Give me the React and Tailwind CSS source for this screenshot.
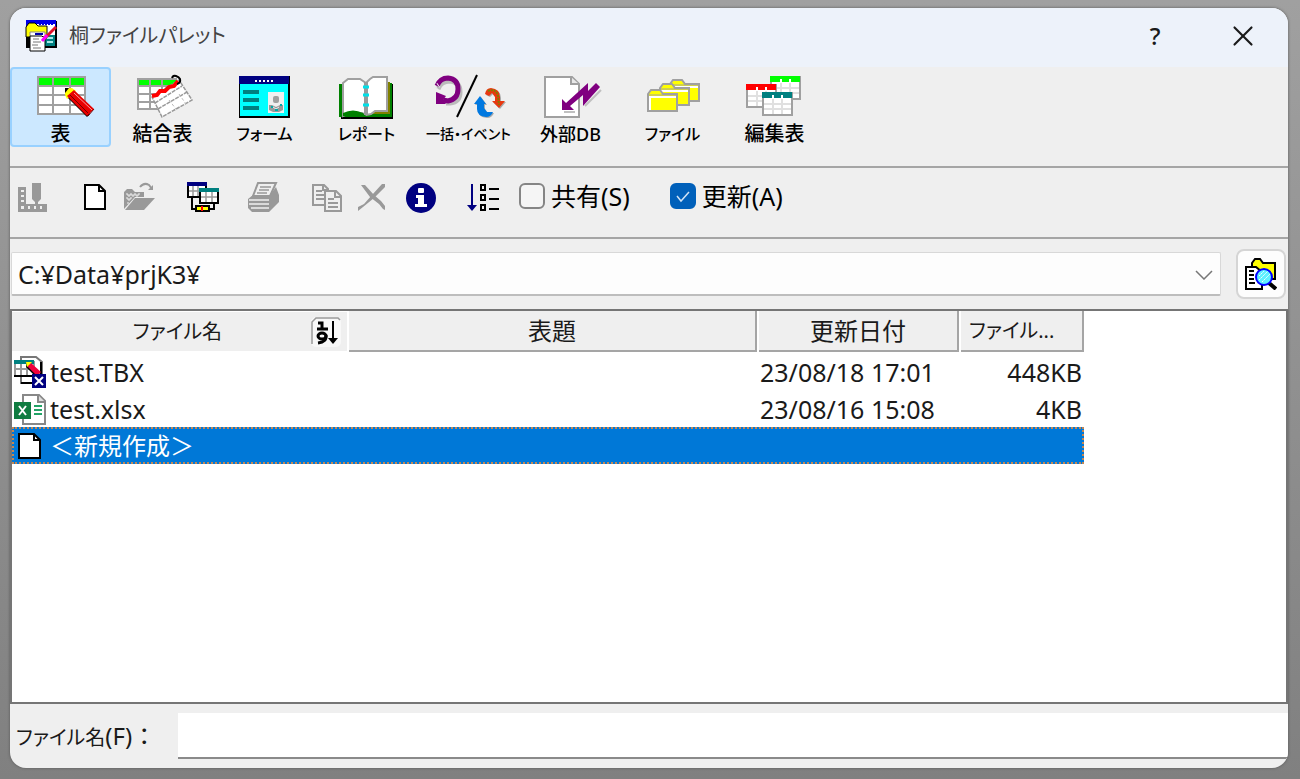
import { useState } from 'react';
import { X } from 'lucide-react';

const AppIcon = () => (
    <svg viewBox="0 0 32 32" className="size-8" aria-hidden="true">
        <rect x="1" y="1" width="31" height="27" fill="#000" />
        <rect x="1" y="0" width="30" height="7" fill="#0000e8" />
        <rect x="12" y="4" width="18" height="11" fill="#fff" />
        <path d="M14 4h14" stroke="#0000e8" strokeWidth="2" strokeDasharray="2 1" />
        <rect x="20" y="15" width="10" height="11" fill="#008080" />
        <path d="M22 18h6M22 22h6" stroke="#a8e8e8" strokeWidth="2" />
        <path d="M1 17V7l3-4h6l3 3h9v11z" fill="#ff0" stroke="#000" />
        <path d="M5 16V12h15v4" fill="#fff" stroke="#888" />
        <path d="M10 14h8" stroke="#00a" strokeWidth="2" />
        <path d="M5 16h12l3 3v12H5z" fill="#fff" stroke="#000" />
        <path d="M8 19h6M8 22h8M7 25h6M8 28h8" stroke="#777" />
        <path d="M31 7L19 19" stroke="#e0102a" strokeWidth="3" />
        <path d="M22 15l-5 6" stroke="#f0f" strokeWidth="3" />
    </svg>
);

const TableIcon = () => (
    <g>
        <rect x="17" y="2" width="49" height="39" fill="#fff" />
        <rect x="18" y="3" width="47" height="9" fill="#0f0" />
        <path d="M17 3h49M17 12h49M17 21h49M17 31h49M17 40h49M18 2v39M33 2v39M50 2v39M65 2v39" stroke="#a0a0a0" strokeWidth="2" fill="none" />
        <path d="M46 15v7L67 43l3-3L49 16z" fill="#000" />
        <path d="M45 14h7l4 3-9 8-2-4z" fill="#ff0" />
        <path d="M45 14h4l-4 5z" fill="#000" />
        <path d="M54 16L74 35l-7 7-20-20z" fill="#e80000" />
        <path d="M54 19l18 17" stroke="#ff9a9a" strokeWidth="1" />
        <path d="M50 21l18 18M68 42l6-7" stroke="#700000" strokeWidth="1" />
    </g>
);

const JoinIcon = () => (
    <g>
        <rect x="16" y="5" width="38" height="30" fill="#fff" />
        <rect x="16" y="5" width="38" height="7" fill="#0f0" />
        <path d="M15 5h40M15 12h40M15 20h28M15 28h28M15 35h22M16 4v31M28 4v31M40 4v31" stroke="#a0a0a0" strokeWidth="2" fill="none" />
        <path d="M30 23L57 6l13 20-30 17z" fill="#fff" stroke="#999" strokeWidth="1.5" strokeDasharray="4 1" />
        <path d="M33 29l27-17M36 35l29-17" stroke="#999" strokeWidth="1.5" strokeDasharray="4 1" />
        <path d="M47 26l7 9M57 20l7 10" stroke="#bbb" strokeDasharray="3 2" />
        <path d="M30 22l5-1 3-4 5 0 4-4 5-1 4-5" stroke="#f00" strokeWidth="4" fill="none" />
        <path d="M50 4q1-3 4-2t4 3q1 4-3 5" stroke="#000" strokeWidth="2" fill="none" />
    </g>
);

const FormIcon = () => (
    <g>
        <rect x="15" y="2" width="51" height="42" fill="#000" />
        <rect x="16" y="10" width="48" height="32" fill="#0ff" />
        <rect x="15" y="2" width="50" height="8" fill="#000080" />
        <path d="M31 7h18" stroke="#fff" strokeWidth="2" strokeDasharray="2 2" />
        <path d="M19 18h16M19 26h16M19 34h16" stroke="#008080" strokeWidth="4" />
        <rect x="44" y="18" width="16" height="21" fill="#f0f0f0" />
        <rect x="49" y="22" width="6" height="7" rx="2" fill="#a0a0a0" />
        <path d="M45 31h3l4 2 4-2h3v5l-4 2h-6l-4-2z" fill="#999" />
        <path d="M49 33l3 2 3-2" stroke="#eee" fill="none" />
        <path d="M47 33h2M56 31h2M51 36h3" stroke="#0aa" strokeWidth="2" />
    </g>
);

const BookIcon = () => (
    <g>
        <path d="M14 10h53v35H15z" fill="#000" />
        <path d="M13 10h4v30h46V9h3v34H13z" fill="#008000" />
        <path d="M44 39l6-3h11V8h3v32H44z" fill="#808000" />
        <path d="M17 9l5-4h12l6 4 4-4 3-2h14v34H49l-4 3-5 1-4-2H24l-7 3z" fill="#fff" stroke="#a0a0a0" strokeWidth="2" />
        <path d="M17 39q10-5 20 0l3 3H17z" fill="#008000" />
        <path d="M40 8v33" stroke="#999" strokeWidth="4" />
        <path d="M37 13h6M37 21h6M37 31h6" stroke="#00e0e8" strokeWidth="3" />
    </g>
);

const BatchIcon = () => (
    <g fill="none">
        <path d="M9 13q3-8 12-8 10 1 10 11t-10 11h-4" stroke="#bbb" strokeWidth="5" transform="translate(1 2)" />
        <path d="M9 12q3-8 11-8 10 1 10 11T20 27l-5-1" stroke="#800080" strokeWidth="5" />
        <path d="M5 15l7-5" stroke="#efefef" strokeWidth="5" strokeDasharray="1 2" />
        <path d="M8 18v12h10l-3-4 3-4z" fill="#800080" />
        <path d="M49 1L29 43" stroke="#000" strokeWidth="2" />
        <path d="M46 30l6-8 6 8h-2v4l3 4h6q-2 5-7 5-9-1-9-8v-5z" fill="#aaa" transform="translate(1 1)" />
        <path d="M46 30l6-8 6 8h-2v4l3 4h6q-2 5-7 5-9-1-9-8v-5z" fill="#0078e0" />
        <path d="M57 20q1-6 6-6 9 1 9 9v4h5l-6 7-7-7h3v-4l-3-4-3 3z" fill="#aaa" transform="translate(1 1)" />
        <path d="M57 20q1-6 6-6 9 1 9 9v4h5l-6 7-7-7h3v-4l-3-4-3 3z" fill="#e83810" />
        <path d="M60 17q8-3 10 5l1 9" stroke="#808000" strokeWidth="2" strokeDasharray="2 1" />
    </g>
);

const ExternalDbIcon = () => (
    <g>
        <path d="M15 3h27l7 7v33H15z" fill="#fff" stroke="#a0a0a0" strokeWidth="2" />
        <path d="M41 3v7h8" fill="#e8e8e8" stroke="#a0a0a0" strokeWidth="2" />
        <path d="M34 38h11M55 32l16-16" stroke="#c0c0c0" strokeWidth="2" fill="none" />
        <path d="M32 25v11h12l-4-4 13-11v11L70 13l-4-4-8 8V9L36 29z" fill="#800080" />
    </g>
);

const Folder = ({ x, y }) => (
    <g transform={`translate(${x} ${y})`}>
        <path d="M1 21V4l3-4h9l3 4h14v17z" fill="#ff0" stroke="#a0a0a0" strokeWidth="2" />
        <path d="M2 5h28" stroke="#a0a0a0" strokeWidth="1" />
        <path d="M3 20V7h26" stroke="#fff" strokeWidth="2" fill="none" />
    </g>
);

const FoldersIcon = () => (
    <g>
        <Folder x={37} y={6} />
        <Folder x={27} y={10} />
        <Folder x={15} y={16} />
    </g>
);

const MiniTable = ({ x, y, color }) => (
    <g transform={`translate(${x} ${y})`}>
        <rect x="1" y="1" width="29" height="22" fill="#fff" stroke="#a0a0a0" strokeWidth="2" />
        <path d="M11 7v15M20 7v15M2 12h27M2 17h27" stroke="#e0e0e0" strokeWidth="2" />
        <rect x="0" y="0" width="30" height="6" fill={color} />
        <path d="M11 3v3M20 3v3" stroke="#fff" strokeWidth="2" />
    </g>
);

const EditTablesIcon = () => (
    <g>
        <MiniTable x={36} y={2} color="#00ff00" />
        <MiniTable x={12} y={10} color="#ff0000" />
        <MiniTable x={28} y={18} color="#008080" />
    </g>
);

const NewFileShape = () => (
    <g>
        <path d="M6 4h14l6 6v18H6z" fill="#fff" stroke="#000" strokeWidth="2" />
        <path d="M20 4v6h6" fill="none" stroke="#000" strokeWidth="2" />
    </g>
);

const DesignShape = () => (
    <g>
        <path fillRule="evenodd" d="M1 6h8v17h21v8H1zM4 9v2h3V9zM4 14v2h3v-2zM4 19v2h3v-2zM4 25v3h3v-3zM11 25v3h2v-3zM17 25v3h2v-3zM23 25v3h2v-3z" fill="#999" />
        <path d="M15 2h9v16l-3 3v3h-3v-3l-3-3z" fill="#999" />
    </g>
);

const OpenShape = () => (
    <g fill="#999">
        <path d="M1 28V11l3-3h5l3 3h9v5H12z" />
        <path d="M3 13h2v2h2v-2h2v2h2v-2h2v2h2v-2h2M3 17h2v2h2v-2h2M4 22h2" stroke="#efefef" fill="none" />
        <path d="M2 29L12 17h20L21 29z" />
        <path d="M17 6q4-5 9-2l3 4" fill="none" stroke="#999" strokeWidth="2" />
        <path d="M25 9h5V4z" />
    </g>
);

const RelationShape = () => (
    <g>
        <rect x="1" y="2" width="18" height="14" fill="#fff" stroke="#000" strokeWidth="2" />
        <rect x="0" y="1" width="20" height="4" fill="#000080" />
        <path d="M6 5v10M11 5v10M2 10h12" stroke="#999" strokeWidth="1.5" />
        <rect x="13" y="8" width="18" height="14" fill="#fff" stroke="#000" strokeWidth="2" />
        <rect x="12" y="7" width="20" height="4" fill="#008080" />
        <path d="M19 11v10M25 11v10M14 16h16" stroke="#999" strokeWidth="1.5" />
        <path d="M5 16v12h4M27 22v6h-4" fill="none" stroke="#000" strokeWidth="2" />
        <rect x="9" y="25" width="13" height="5" fill="#ff0" stroke="#000" strokeWidth="2" />
        <path d="M15 25v5" stroke="#f00" strokeWidth="2" />
    </g>
);

const PrintShape = () => (
    <g>
        <path d="M11 2h18l-6 13H6z" fill="#efefef" stroke="#999" strokeWidth="2" />
        <path d="M13 6h11M12 9h10M10 12h10" stroke="#999" strokeWidth="1.5" />
        <path d="M1 18l5-4h17l6-8 3 8v7L22 31H5l-4-4z" fill="#999" />
        <path d="M2 19h20M2 23h20M4 27h18" stroke="#efefef" strokeWidth="1.5" />
    </g>
);

const CopyShape = () => (
    <g fill="#efefef" stroke="#999" strokeWidth="2">
        <path d="M2 4h11l4 4v16H2zM12 4v5h5" />
        <path d="M5 10h6M5 14h8M5 18h8" />
        <path d="M14 10h11l5 5v15H14zM24 10v6h6" />
        <path d="M17 18h6M17 22h10M17 26h10" />
    </g>
);

const DeleteShape = () => (
    <g fill="#999">
        <path d="M27 3h3v3L19 17 8 26l-5 4v-4l6-3 8-9z" />
        <path d="M6 4h4l9 10 7 6 4 5v4l-2-1-4-5-9-7z" />
    </g>
);

const InfoShape = () => (
    <g>
        <circle cx="16" cy="17" r="15" fill="#000080" />
        <rect x="13" y="7" width="6" height="5" rx="1" fill="#fff" />
        <path d="M11 14h8v9h3v3H10v-3h3v-6h-2z" fill="#fff" />
    </g>
);

const SortShape = () => (
    <g fill="none">
        <path d="M5 3v22" stroke="#000080" strokeWidth="2" />
        <path d="M0 24h10l-5 6z" fill="#000080" />
        <path d="M14 4h4v5h-4zM14 14h4v5h-4zM14 24h4v5h-4zM22 8h10M22 18h10M22 28h10" stroke="#000" strokeWidth="2" />
    </g>
);

const SearchFolderIcon = () => (
    <svg viewBox="0 0 32 32" className="size-8" aria-hidden="true">
        <path d="M7 9V5l3-4h5l3 4h12v16H7z" fill="#ff0" stroke="#000" strokeWidth="2" />
        <path d="M1 9h10l6 5v17H1z" fill="#fff" stroke="#000" strokeWidth="2" />
        <path d="M4 13h5M4 17h5M4 21h5M4 25h6" stroke="#000" strokeWidth="2" />
        <path d="M24 25l7 6" stroke="#000" strokeWidth="4" />
        <circle cx="19" cy="19" r="8" fill="#5ff0ff" stroke="#00f" strokeWidth="2" />
        <path d="M14 18l5-5M14 22l9-9M17 24l8-8" stroke="#fff" strokeDasharray="2 1" />
    </svg>
);

const TbxIcon = () => (
    <svg viewBox="0 0 32 32" className="size-8 shrink-0" aria-hidden="true">
        <path d="M7 1h15l6 5v21H7z" fill="#fff" stroke="#777" strokeWidth="2" />
        <path d="M27 6v16M7 27h12" stroke="#000" strokeWidth="2" />
        <rect x="1" y="6" width="19" height="14" fill="#fff" stroke="#999" strokeWidth="2" />
        <rect x="0" y="4" width="20" height="4" fill="#008080" />
        <path d="M7 8v11M13 8v11M2 13h18" stroke="#999" strokeWidth="2" />
        <path d="M0 20h20" stroke="#000" strokeWidth="2" />
        <path d="M13 6l15 14-5 2L12 11z" fill="#000" />
        <path d="M17 7l10 9-4 4-10-10z" fill="#f0003c" />
        <path d="M12 6h6l-5 5z" fill="#ff0" />
        <rect x="18" y="18" width="14" height="14" fill="#000080" />
        <path d="M21 21l8 8M29 21l-8 8" stroke="#fff" strokeWidth="2" />
    </svg>
);

const ExcelIcon = () => (
    <svg viewBox="0 0 32 32" className="size-8 shrink-0" aria-hidden="true">
        <path d="M9 2h16l6 6v23H9z" fill="#fff" stroke="#888" strokeWidth="2" />
        <path d="M24 2v7h7" fill="#ddd" stroke="#888" strokeWidth="2" />
        <path d="M20 13h8M20 17h8M20 21h8" stroke="#21a366" strokeWidth="2" />
        <rect x="0" y="9" width="17" height="17" fill="#107c41" />
        <path d="M5 13l7 9M12 13l-7 9" stroke="#fff" strokeWidth="2" />
    </svg>
);

const BlankIcon = () => (
    <svg viewBox="0 0 32 32" className="size-8 shrink-0" aria-hidden="true">
        <path d="M5 4h15l6 6v18H5z" fill="#fff" stroke="#000" strokeWidth="2" />
        <path d="M20 4v6h6" fill="none" stroke="#000" strokeWidth="2" />
    </svg>
);

const SortBadge = () => (
    <svg viewBox="0 0 30 30" className="size-[30px]" aria-hidden="true">
        <rect x="0" y="0" width="30" height="30" rx="5" fill="#f8f8f8" />
        <path d="M1 27V5l4-4h22l2 2" fill="none" stroke="#999" strokeWidth="1.5" />
        <path d="M7 6h4v6M6 12h11" stroke="#000" strokeWidth="3" fill="none" />
        <ellipse cx="11" cy="19" rx="4" ry="3" fill="none" stroke="#000" strokeWidth="3" />
        <path d="M15 18q1 7-8 8" fill="none" stroke="#000" strokeWidth="3" />
        <path d="M22 4v20" stroke="#000" strokeWidth="2" />
        <path d="M17 21h10l-5 6z" fill="#000" />
    </svg>
);

const categories = [
    { label: '表', icon: <TableIcon />, size: 'text-xl' },
    { label: '結合表', icon: <JoinIcon />, size: 'text-xl' },
    { label: 'フォーム', icon: <FormIcon />, size: 'text-base' },
    { label: 'レポート', icon: <BookIcon />, size: 'text-base' },
    { label: '一括・イベント', icon: <BatchIcon />, size: 'text-sm' },
    { label: '外部DB', icon: <ExternalDbIcon />, size: 'text-lg' },
    { label: 'ファイル', icon: <FoldersIcon />, size: 'text-base' },
    { label: '編集表', icon: <EditTablesIcon />, size: 'text-xl' },
];

const tools = [
    { name: '定義', icon: <DesignShape />, disabled: true, space: '' },
    { name: '新規', icon: <NewFileShape />, space: 'ml-[30px]' },
    { name: '開く', icon: <OpenShape />, disabled: true, space: 'ml-3' },
    { name: '表の結合', icon: <RelationShape />, space: 'ml-8' },
    { name: '印刷', icon: <PrintShape />, disabled: true, space: 'ml-7' },
    { name: 'コピー', icon: <CopyShape />, disabled: true, space: 'ml-8' },
    { name: '削除', icon: <DeleteShape />, disabled: true, space: 'ml-3' },
    { name: '情報', icon: <InfoShape />, space: 'ml-[18px]' },
    { name: '並べ替え', icon: <SortShape />, space: 'ml-[30px]' },
];

const files = [
    { name: 'test.TBX', date: '23/08/18 17:01', size: '448KB', icon: <TbxIcon /> },
    { name: 'test.xlsx', date: '23/08/16 15:08', size: '4KB', icon: <ExcelIcon /> },
    { name: '＜新規作成＞', date: '', size: '', icon: <BlankIcon /> },
];

function Option({ label, checked, onChange, className = '' }) {
    return (
        <label className={`flex items-center gap-1.5 ${className}`}>
            <span className="relative flex size-[26px]">
                <input
                    type="checkbox"
                    checked={checked}
                    onChange={onChange}
                    className="size-[26px] appearance-none rounded-md border-2 border-[#858585] bg-[#f5f5f5] checked:border-[#0060ba] checked:bg-[#0060ba]"
                />
                {checked && (
                    <svg viewBox="0 0 26 26" className="pointer-events-none absolute inset-0" aria-hidden="true">
                        <path d="M7 13l4 5 8-9" fill="none" stroke="#cfe2f5" strokeWidth="1.5" />
                    </svg>
                )}
            </span>
            <span>{label}</span>
        </label>
    );
}

export default function App() {
    const [category, setCategory] = useState(0);
    const [selected, setSelected] = useState(2);
    const [shared, setShared] = useState(false);
    const [update, setUpdate] = useState(true);
    const [fileName, setFileName] = useState('');

    return (
        <div className="flex min-h-screen bg-linear-to-b from-[#a0a0a0] to-[#808080] pt-2 pr-3 pb-[11px] pl-2.5 font-['Noto_Sans','Noto_Sans_CJK_JP',sans-serif] text-[25px] leading-8 text-[#1a1a1a] [font-feature-settings:'palt']">
            <div className="flex grow flex-col overflow-hidden rounded-2xl bg-[#efefef] shadow-[0_0_3px_#555]">
                <header className="flex h-[59px] items-center bg-[#edf2fa] pr-8 pb-1 pl-[15px]">
                    <AppIcon />
                    <h1 className="ml-3 grow text-xl text-[#444]">桐ファイルパレット</h1>
                    <button aria-label="ヘルプ" className="w-8 text-2xl font-medium">?</button>
                    <button aria-label="閉じる" className="ml-[59px] flex size-[26px] items-center justify-center">
                        <X size={34} strokeWidth={1.5} className="shrink-0" />
                    </button>
                </header>

                <nav className="flex h-[101px] gap-px border-b-2 border-[#a5a5a5]">
                    {categories.map((c, i) => (
                        <button
                            key={c.label}
                            onClick={() => setCategory(i)}
                            className={`flex h-20 w-[101px] flex-col items-center rounded-sm border-2 pt-[5px] ${i === category ? 'border-[#99d1ff] bg-[#cce8ff]' : 'border-transparent'}`}
                        >
                            <svg viewBox="0 0 81 46" className="h-[46px] w-[81px] shrink-0" aria-hidden="true">{c.icon}</svg>
                            <span className={`leading-7 font-medium whitespace-nowrap text-black ${c.size}`}>
                                <span className="leading-7">{c.label}</span>
                            </span>
                        </button>
                    ))}
                </nav>

                <div className="flex h-[71px] items-start border-b-2 border-[#a5a5a5] pt-3 pl-[7px] text-black">
                    {tools.map((t) => (
                        <button key={t.name} aria-label={t.name} disabled={t.disabled} className={`mt-px ${t.space}`}>
                            <svg viewBox="0 0 32 32" className="size-8" aria-hidden="true">{t.icon}</svg>
                        </button>
                    ))}
                    <Option label="共有(S)" checked={shared} onChange={() => setShared(!shared)} className="ml-5" />
                    <Option label="更新(A)" checked={update} onChange={() => setUpdate(!update)} className="ml-10" />
                </div>

                <div className="flex h-[70px] items-center gap-[15px] pr-0.5 pl-px">
                    <div className="relative grow">
                        <select aria-label="フォルダー" className="block h-11 w-full appearance-none rounded-xs border border-b-2 border-[#d8d8d8] border-b-[#bdbdbd] bg-[#fdfdfd] px-1.5">
                            <option>C:¥Data¥prjK3¥</option>
                        </select>
                        <svg viewBox="0 0 18 10" className="pointer-events-none absolute top-[18px] right-2 h-2.5 w-[18px]" aria-hidden="true">
                            <path d="M1 1l8 8 8-8" fill="none" stroke="#777" strokeWidth="1.5" />
                        </svg>
                    </div>
                    <button aria-label="検索" className="flex size-[50px] items-center justify-center rounded-lg border-2 border-[#d5d5d5] bg-[#fdfdfd]">
                        <SearchFolderIcon />
                    </button>
                </div>

                <div className="grow border-2 border-[#757575] bg-white">
                    <table className="w-[1072px] table-fixed border-separate border-spacing-0">
                        <colgroup>
                            <col className="w-[337px]" />
                            <col className="w-[410px]" />
                            <col className="w-[202px]" />
                            <col className="w-[123px]" />
                        </colgroup>
                        <thead className="text-2xl leading-8">
                            <tr>
                                <th className="p-0 pr-0.5 pb-px font-normal">
                                    <div className="flex h-[39px] items-center bg-[#efefef] pr-1.5">
                                        <span className="grow pl-8 text-xl">ファイル名</span>
                                        <SortBadge />
                                    </div>
                                </th>
                                <th className="p-0 pr-0.5 pb-px font-normal">
                                    <div className="h-[41px] border-r-2 border-b-2 border-[#a5a5a5] bg-[#efefef] pt-1">表題</div>
                                </th>
                                <th className="p-0 pr-0.5 pb-px font-normal">
                                    <div className="h-[41px] border-r-2 border-b-2 border-[#a5a5a5] bg-[#efefef] pt-1">更新日付</div>
                                </th>
                                <th className="p-0 pb-px font-normal">
                                    <div className="flex h-[41px] items-center border-r-2 border-b-2 border-[#a5a5a5] bg-[#efefef] pl-2 text-xl">ファイル...</div>
                                </th>
                            </tr>
                        </thead>
                        <tbody>
                            {files.map((f, i) => (
                                <tr
                                    key={f.name}
                                    onClick={() => setSelected(i)}
                                    className={i === selected ? 'bg-[#0078d7] text-2xl leading-8 text-white outline-2 -outline-offset-2 outline-dotted outline-[#c58652]' : ''}
                                >
                                    <td className="h-[37px] p-0 pl-0.5" colSpan={2}>
                                        <div className="flex items-center gap-1">
                                            {f.icon}
                                            <span>{f.name}</span>
                                        </div>
                                    </td>
                                    <td className="p-0 pl-px whitespace-nowrap">{f.date}</td>
                                    <td className="p-0 pr-0.5 text-right">{f.size}</td>
                                </tr>
                            ))}
                        </tbody>
                    </table>
                </div>

                <div className="flex h-16 items-center pl-1.5">
                    <label htmlFor="file-name" className="w-[162px] text-2xl leading-8 whitespace-nowrap">
                        <span className="text-xl">ファイル名</span>(F)
                        <span className="[font-feature-settings:normal]">：</span>
                    </label>
                    <input
                        id="file-name"
                        value={fileName}
                        onChange={(e) => setFileName(e.target.value)}
                        className="h-[46px] grow border-b-2 border-[#8a8a8a] bg-white px-2 outline-none"
                    />
                </div>
            </div>
        </div>
    );
}
